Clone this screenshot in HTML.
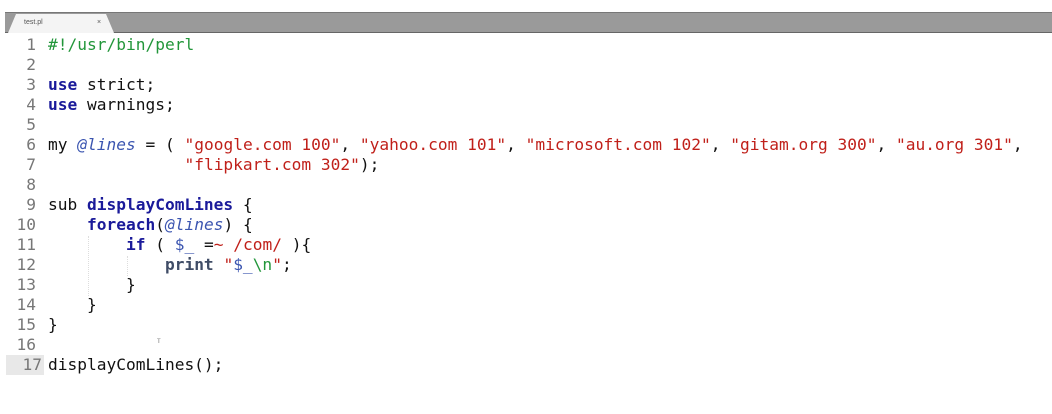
<!DOCTYPE html>
<html><head><style>
body{margin:0;width:1052px;height:414px;background:#fff;overflow:hidden;position:relative;font-family:"DejaVu Sans Mono",monospace;}
.bar{position:absolute;left:5px;top:12px;width:1047px;height:21px;background:#9a9a9a;border-top:1px solid #777;border-bottom:1px solid #666;box-sizing:border-box}
.tab{position:absolute;left:8px;top:14px;width:106px;height:19px;background:#f4f4f4;clip-path:polygon(0 100%,8px 0,98px 0,106px 100%);font:7px "Liberation Sans",sans-serif;color:#555}
.code{position:absolute;left:0;top:35px;font-size:16.2px;line-height:20px;white-space:pre;color:#111}
.ln{display:inline-block;width:36px;text-align:right;color:#777;margin-right:12px}
.hl{background:#e8e8e8;display:inline-block;width:38px;margin-left:6px;text-align:right;padding-right:2px;box-sizing:border-box;margin-right:4px}
.k{color:#1a1a9a;font-weight:bold}
.s{color:#c0201a}
.c{color:#22963a}
.v{color:#3b55b0;font-style:italic}
.v2{color:#3b55b0}
.p{color:#3f4c66;font-weight:bold}
.g{color:#22963a}
.guide{position:absolute;width:0;border-left:1px dotted #ddd}
</style></head><body>
<div class="bar"></div>
<div class="tab"><span style="position:absolute;left:16px;top:5px">test.pl</span><span style="position:absolute;left:89px;top:5px">×</span></div>
<div class="guide" style="left:88px;top:236px;height:60px"></div>
<div class="guide" style="left:127px;top:256px;height:20px"></div>
<div class="code"><span class="ln">1</span><span class="c">#!/usr/bin/perl</span>
<span class="ln">2</span>
<span class="ln">3</span><span class="k">use</span> strict;
<span class="ln">4</span><span class="k">use</span> warnings;
<span class="ln">5</span>
<span class="ln">6</span>my <span class="v">@lines</span> = ( <span class="s">"google.com 100"</span>, <span class="s">"yahoo.com 101"</span>, <span class="s">"microsoft.com 102"</span>, <span class="s">"gitam.org 300"</span>, <span class="s">"au.org 301"</span>,
<span class="ln">7</span>              <span class="s">"flipkart.com 302"</span>);
<span class="ln">8</span>
<span class="ln">9</span>sub <span class="k">displayComLines</span> {
<span class="ln">10</span>    <span class="k">foreach</span>(<span class="v">@lines</span>) {
<span class="ln">11</span>        <span class="k">if</span> ( <span class="v2">$_</span> =<span class="s">~ /com/</span> ){
<span class="ln">12</span>            <span class="p">print</span> <span class="s">"</span><span class="v2">$_</span><span class="g">\n</span><span class="s">"</span>;
<span class="ln">13</span>        }
<span class="ln">14</span>    }
<span class="ln">15</span>}
<span class="ln">16</span>
<span class="hl" style="color:#777">17</span>displayComLines();</div>
<div style="position:absolute;left:157px;top:336px;font:8px sans-serif;color:#888">т</div>
</body></html>
